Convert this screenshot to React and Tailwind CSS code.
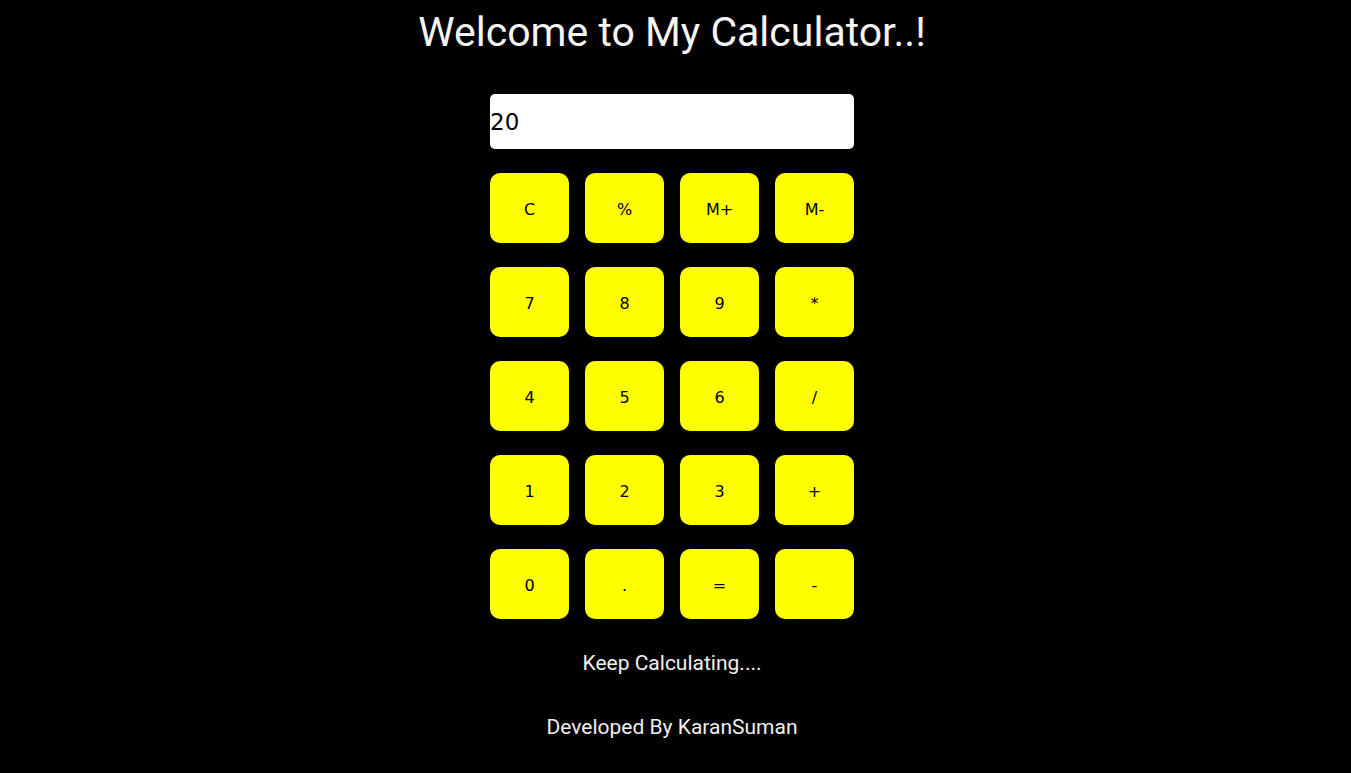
import React, { useState } from 'react';

const KEYS = [
  ['C', '%', 'M+', 'M-'],
  ['7', '8', '9', '*'],
  ['4', '5', '6', '/'],
  ['1', '2', '3', '+'],
  ['0', '.', '=', '-'],
];

export default function App() {
  const [display, setDisplay] = useState('20');

  return (
    <div className="min-h-screen bg-black text-white flex flex-col items-center pr-[7px] font-['Roboto',sans-serif]">
      <h1 className="mt-[8px] text-[41px] leading-[48px] font-normal text-[#f5f5f5]">Welcome to My Calculator..!</h1>

      <input
        value={display}
        onChange={(e) => setDisplay(e.target.value)}
        className="mt-[38px] w-[364px] h-[55px] bg-white text-black rounded-[5px] text-[23px] font-['DejaVu_Sans',sans-serif] outline-none"
      />

      <div className="mt-[24px] grid grid-cols-4 gap-x-[16px] gap-y-[24px]">
        {KEYS.flat().map((k) => (
          <button
            key={k}
            className="w-[79px] h-[70px] pt-[3px] bg-[#ffff00] rounded-[10px] text-black text-[16px] font-['DejaVu_Sans',sans-serif]"
          >
            {k}
          </button>
        ))}
      </div>

      <p className="mt-[32px] text-[21px] leading-[24px] text-[#f0f0f0]">Keep Calculating....</p>
      <p className="mt-[40px] text-[21px] leading-[24px] text-[#f0f0f0]">Developed By KaranSuman</p>
    </div>
  );
}
